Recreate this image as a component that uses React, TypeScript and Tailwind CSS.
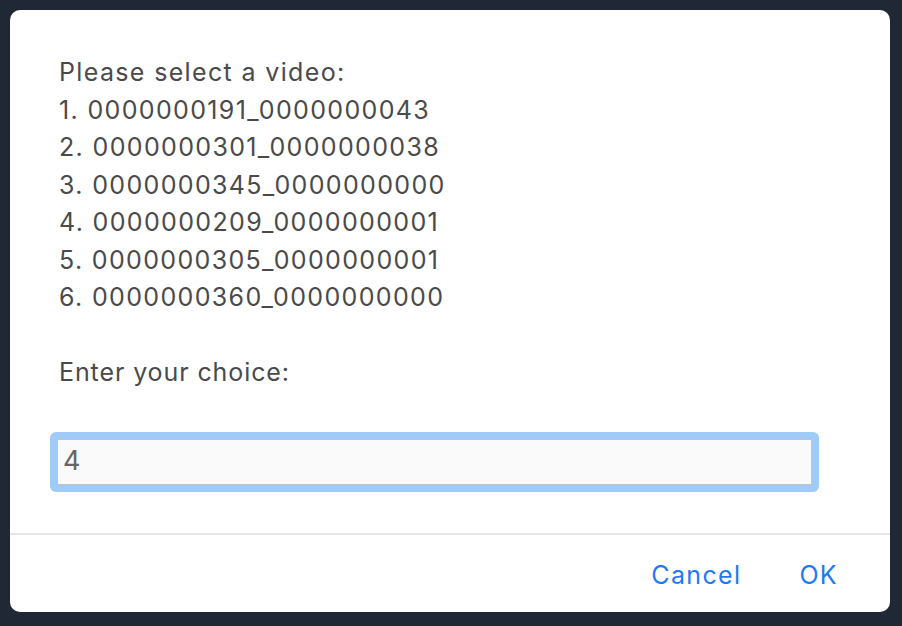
import React from "react";

export default function App() {
  const lines = [
    "Please select a video:",
    "1. 0000000191_0000000043",
    "2. 0000000301_0000000038",
    "3. 0000000345_0000000000",
    "4. 0000000209_0000000001",
    "5. 0000000305_0000000001",
    "6. 0000000360_0000000000",
    "\u00a0",
  ];
  return (
    <div className="w-[902px] h-[626px] bg-[#1f2834] p-[10px] pr-[12px] pb-[14px] font-['Inter',sans-serif]">
      <div className="w-[880px] h-[602px] bg-white rounded-[10px] flex flex-col overflow-hidden">
        <div className="pl-[49px] pr-[40px] pt-[44px] text-[25px] leading-[37.5px] text-[#4a4a4a] tracking-[1.35px]">
          {lines.map((l, i) => (
            <div key={i}>{l}</div>
          ))}
          <div className="tracking-[0.9px]">Enter your choice:</div>
        </div>
        <div className="pl-[40px] pt-[40px]">
          <div className="w-[769px] h-[60px] rounded-[6px] bg-[#9fcbf8] p-[7px]">
            <div className="h-full bg-[#fafafa] border border-[#c4c4c4] flex items-center pl-[5px] text-[27px] text-[#666666]">
              4
            </div>
          </div>
        </div>
        <div className="mt-[41px] border-t-[2px] border-[#e6e6e6] flex-1 flex items-center justify-end pt-[4px] pr-[52px] gap-[58px] text-[25px] text-[#1d7af3] tracking-[1.35px]">
          <span>Cancel</span>
          <span>OK</span>
        </div>
      </div>
    </div>
  );
}
